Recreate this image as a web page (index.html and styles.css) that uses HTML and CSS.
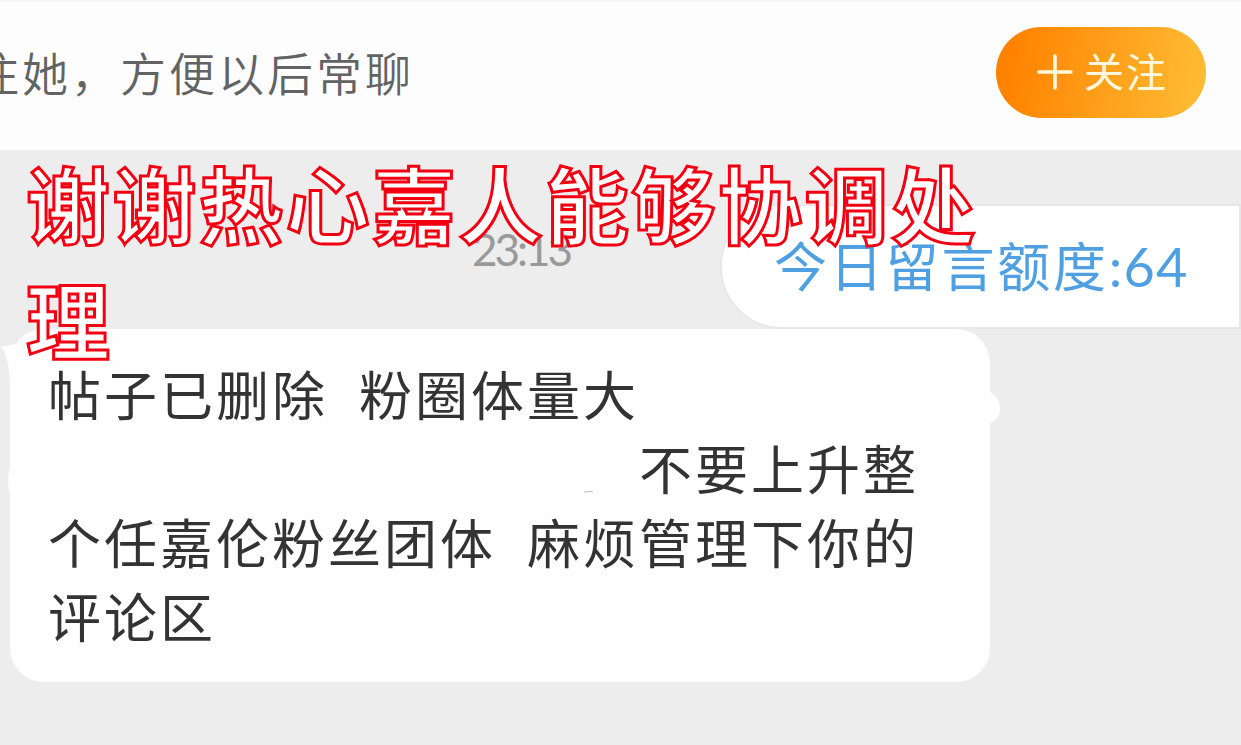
FILE: index.html
```
<!DOCTYPE html>
<html lang="zh-CN">
<head>
  <meta charset="UTF-8" />
  <meta name="viewport" content="width=device-width, initial-scale=1.0"/>
  <title>私信</title>
  <link rel="stylesheet" href="styles.css">
</head>
<body>

  <header class="follow-bar">
    <p class="tip">注她，方便以后常聊</p>
    <button class="follow">
      <svg class="plus" viewBox="0 0 36 36"><path d="M18 2V34M2 18H34"/></svg>
      <span>关注</span>
    </button>
  </header>

  <main class="chat">
    <time class="time">23:13</time>
    <div class="quota">今日留言额度<span class="num">:64</span></div>

    <div class="bubble">
      <svg class="edge" viewBox="0 0 18 60"><path d="M0 17Q8 24 10 52H18V14Q12 17 0 17Z"/></svg>
      <svg class="bump" viewBox="0 0 12 34"><path d="M0 0Q11 7 11 18Q11 28 0 33Z"/></svg>
      <svg class="nick" viewBox="0 0 12 28"><path d="M4 0Q0 14 4 28H12V0Z"/></svg>
      <svg class="speck" viewBox="0 0 10 3"><path d="M0 2.2L6 1.4L9 1.8"/></svg>
      <p>帖子已删除<span class="gap"></span>粉圈体量大</p>
      <p class="push">不要上升整</p>
      <p>个任嘉伦粉丝团体<span class="gap"></span>麻烦管理下你的</p>
      <p>评论区</p>
    </div>
  </main>

  <h1 class="caption">谢谢热心嘉人能够协调处理</h1>

</body>
</html>
```
FILE: styles.css
```
* {
  box-sizing: border-box;
}
body {
  position: relative;
  margin: 0;
  height: 745px;
  overflow: hidden;
  background: #ededed;
  font-family: "Noto Sans CJK SC", sans-serif;
}
p, h1 {
  margin: 0;
  font-weight: 400;
}

/* follow bar */
.follow-bar {
  display: flex;
  align-items: center;
  justify-content: space-between;
  height: 150px;
  padding: 0 35px 7px 0;
  background: #fdfdfd;
  border-top: 2px solid #f5f5f5;
}
.tip {
  margin: 0 0 3px -27px;
  font-size: 46px;
  font-weight: 350;
  letter-spacing: 3px;
  color: #636363;
}
.follow {
  display: flex;
  align-items: center;
  width: 210px;
  height: 91px;
  padding: 0 0 0 41px;
  border: none;
  border-radius: 46px;
  background: linear-gradient(100deg, #ff8200 8%, #ffbb33 95%);
  color: #fff8dc;
  font-family: inherit;
  font-size: 40px;
  letter-spacing: 2px;
}
.follow span {
  margin-bottom: 6px;
}
.plus {
  width: 36px;
  height: 36px;
  margin-right: 11px;
  margin-bottom: 2px;
  fill: none;
  stroke: #fff8dc;
  stroke-width: 3.6;
  stroke-linecap: round;
}

/* chat area */
.chat {
  position: relative;
  padding-top: 69px;
}
.time {
  display: block;
  height: 60px;
  margin-left: 472px;
  font-family: Lato, "Noto Sans CJK SC", sans-serif;
  font-size: 44px;
  font-weight: 400;
  line-height: 60px;
  letter-spacing: -3px;
  color: #999;
}
.quota {
  position: absolute;
  top: 54px;
  right: 0;
  width: 521px;
  height: 125px;
  padding-left: 52px;
  border: 2px solid #e7e7e7;
  border-radius: 62px 0 0 62px;
  background: #fff;
  color: #4f9fe3;
  font-size: 53px;
  letter-spacing: 2.8px;
  line-height: 116px;
  white-space: nowrap;
}
.num {
  font-family: Lato, "Noto Sans CJK SC", sans-serif;
  font-size: 54px;
  letter-spacing: 1.2px;
}
.bubble {
  position: relative;
  width: 980px;
  height: 353px;
  margin: 50px 0 0 10px;
  padding: 27px 38px;
  border-radius: 34px;
  background: #fefefe;
  color: #333;
  font-size: 53px;
  letter-spacing: 3px;
  line-height: 74px;
  white-space: nowrap;
}
.gap {
  display: inline-block;
  width: 31px;
}
.push {
  padding-left: 591px;
}

/* rough edges around the bubble */
.edge, .bump, .nick, .speck {
  position: absolute;
  fill: #fefefe;
}
.edge {
  top: 0;
  left: -10px;
  width: 18px;
  height: 60px;
}
.bump {
  top: 62px;
  left: 979px;
  width: 12px;
  height: 34px;
}
.nick {
  top: 138px;
  left: -4px;
  width: 12px;
  height: 28px;
}
.speck {
  top: 161px;
  left: 574px;
  width: 10px;
  height: 3px;
  stroke: #bbb;
}

/* video caption */
.caption {
  position: absolute;
  top: 144px;
  left: 26px;
  width: 960px;
  color: #fff;
  font-size: 84px;
  font-weight: 700;
  letter-spacing: 2.5px;
  line-height: 116px;
  -webkit-text-stroke: 3px #f20012;
}
```
